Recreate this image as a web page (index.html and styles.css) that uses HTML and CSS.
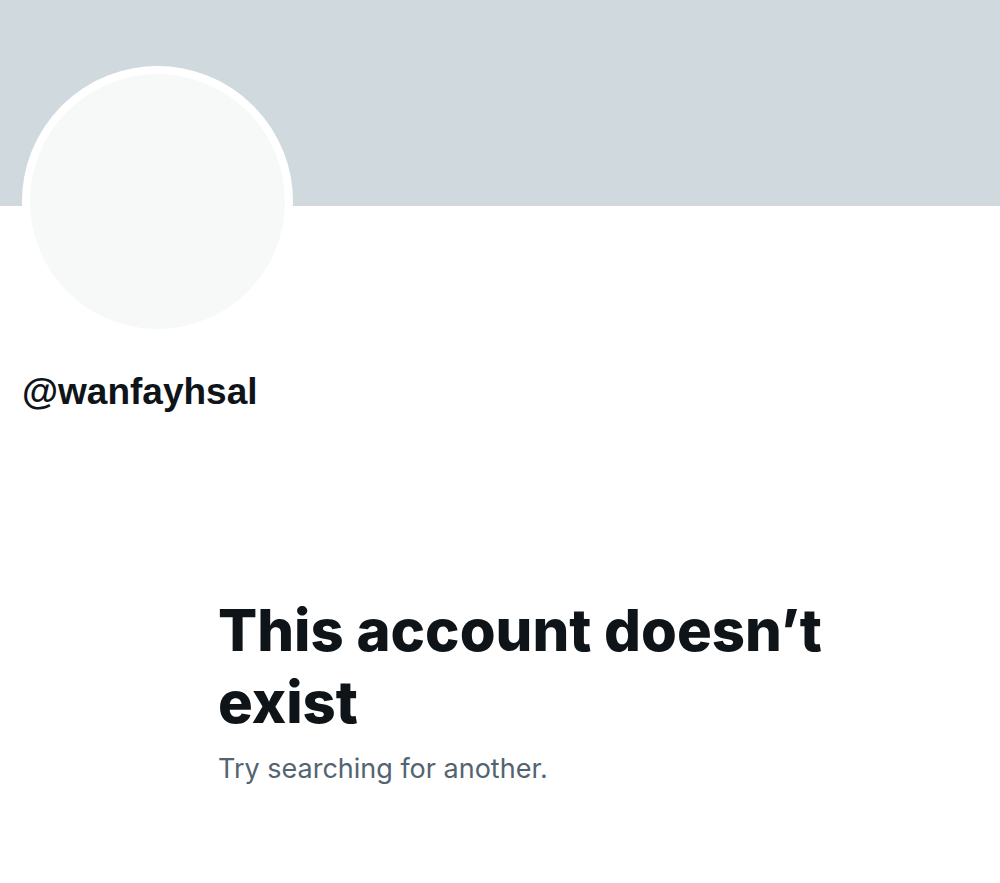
FILE: index.html
```html
<!DOCTYPE html>
<html lang="en">
<head>
<meta charset="utf-8">
<title>Profile</title>
<link rel="stylesheet" href="styles.css">
</head>
<body>
<div class="page">
  <div class="banner"></div>
  <div class="avatar-row">
    <div class="avatar"></div>
  </div>
  <div class="handle">@wanfayhsal</div>
  <div class="empty">
    <h1 class="empty-title">This account doesn’t exist</h1>
    <p class="empty-sub">Try searching for another.</p>
  </div>
</div>
</body>
</html>
```
FILE: styles.css
```css
html, body {
  margin: 0;
  padding: 0;
  background: #ffffff;
}
.page {
  width: 1000px;
  height: 883px;
  overflow: hidden;
}
.banner {
  height: 206px;
  background: #cfd9de;
}
.avatar-row {
  padding-left: 22px;
  margin-top: -140px;
}
.avatar {
  width: 255px;
  height: 255px;
  border: 8px solid #ffffff;
  border-radius: 50%;
  background: #f7f9f9;
}
.handle {
  margin-top: 33px;
  padding-left: 22px;
  font-family: "Liberation Sans", Arial, sans-serif;
  font-weight: 700;
  font-size: 37px;
  line-height: 44px;
  color: #0f1419;
}
.empty {
  padding-left: 218px;
  margin-top: 180px;
  width: 640px;
}
.empty-title {
  margin: 0;
  font-family: Inter, "Noto Sans", sans-serif;
  font-weight: 800;
  font-size: 58px;
  line-height: 72px;
  color: #0f1419;
}
.empty-sub {
  margin: 15px 0 0;
  font-family: Inter, "Noto Sans", sans-serif;
  font-weight: 400;
  font-size: 27px;
  line-height: 32px;
  color: #536471;
}
```
